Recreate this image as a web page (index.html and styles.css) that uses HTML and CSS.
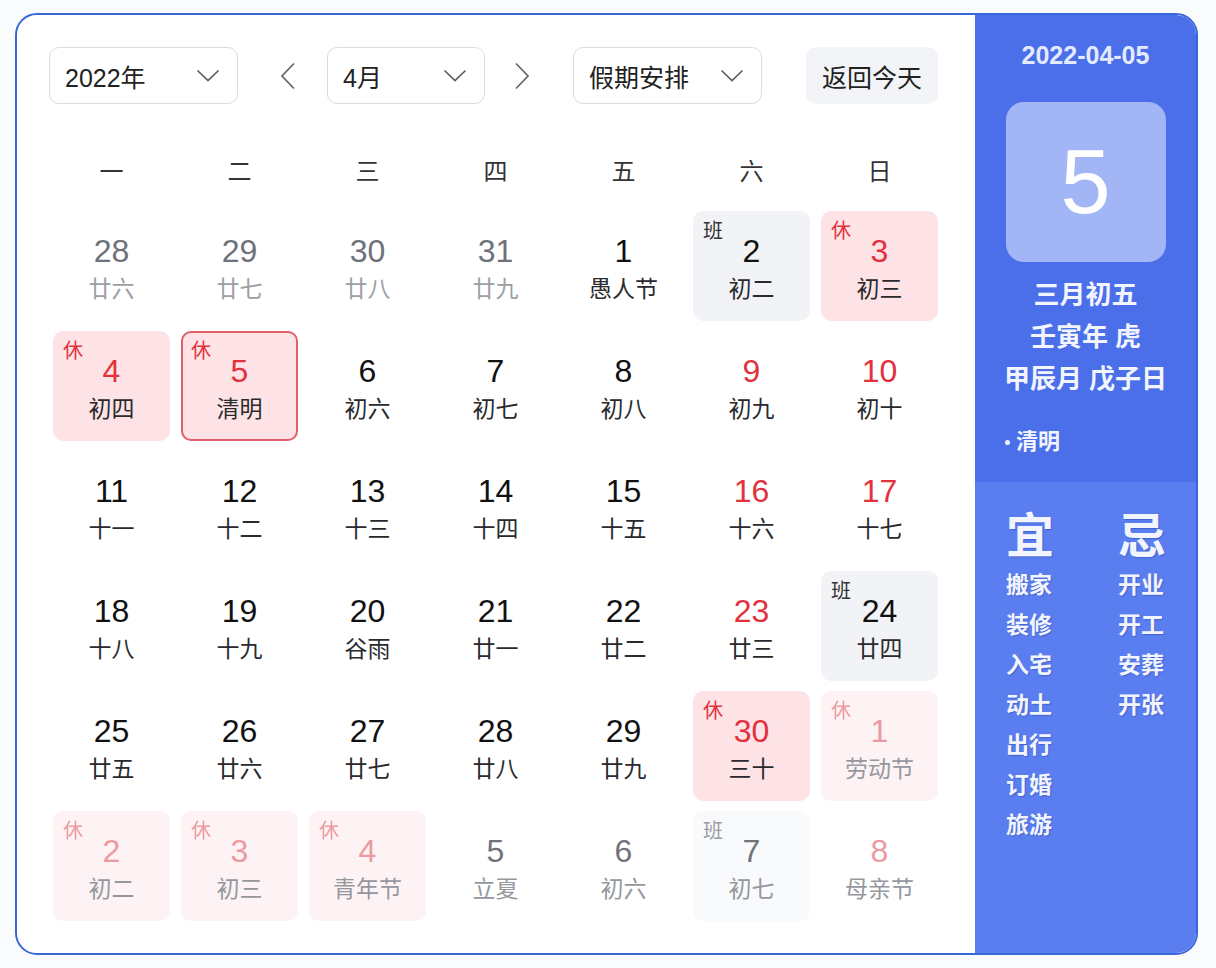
FILE: index.html
```html
<!DOCTYPE html>
<html lang="zh-CN">
<head>
<meta charset="utf-8">
<title>日历</title>
<link rel="stylesheet" href="styles.css">
</head>
<body>
<div class="card">
  <div class="main">
    <div class="toolbar">
      <div class="select sel-year"><span>2022年</span><svg class="chev" viewBox="0 0 24 13"><polyline points="1.5,1.5 12,11.5 22.5,1.5"/></svg></div>
      <div class="nav nav-prev"><svg class="arrow" viewBox="0 0 16 28"><polyline points="14,1.5 2,14 14,26.5"/></svg></div>
      <div class="select sel-month"><span>4月</span><svg class="chev" viewBox="0 0 24 13"><polyline points="1.5,1.5 12,11.5 22.5,1.5"/></svg></div>
      <div class="nav nav-next"><svg class="arrow" viewBox="0 0 16 28"><polyline points="2,1.5 14,14 2,26.5"/></svg></div>
      <div class="select sel-holiday"><span>假期安排</span><svg class="chev" viewBox="0 0 24 13"><polyline points="1.5,1.5 12,11.5 22.5,1.5"/></svg></div>
      <button class="today">返回今天</button>
    </div>
    <div class="weekdays">
      <span>一</span><span>二</span><span>三</span><span>四</span><span>五</span><span>六</span><span>日</span>
    </div>
    <div class="grid">
      <div class="cell prev"><span class="num">28</span><span class="lunar">廿六</span></div>
      <div class="cell prev"><span class="num">29</span><span class="lunar">廿七</span></div>
      <div class="cell prev"><span class="num">30</span><span class="lunar">廿八</span></div>
      <div class="cell prev"><span class="num">31</span><span class="lunar">廿九</span></div>
      <div class="cell"><span class="num">1</span><span class="lunar">愚人节</span></div>
      <div class="cell work"><span class="tag">班</span><span class="num">2</span><span class="lunar">初二</span></div>
      <div class="cell rest"><span class="tag">休</span><span class="num">3</span><span class="lunar">初三</span></div>

      <div class="cell rest"><span class="tag">休</span><span class="num">4</span><span class="lunar">初四</span></div>
      <div class="cell rest selected"><span class="tag">休</span><span class="num">5</span><span class="lunar">清明</span></div>
      <div class="cell"><span class="num">6</span><span class="lunar">初六</span></div>
      <div class="cell"><span class="num">7</span><span class="lunar">初七</span></div>
      <div class="cell"><span class="num">8</span><span class="lunar">初八</span></div>
      <div class="cell weekend"><span class="num">9</span><span class="lunar">初九</span></div>
      <div class="cell weekend"><span class="num">10</span><span class="lunar">初十</span></div>

      <div class="cell"><span class="num">11</span><span class="lunar">十一</span></div>
      <div class="cell"><span class="num">12</span><span class="lunar">十二</span></div>
      <div class="cell"><span class="num">13</span><span class="lunar">十三</span></div>
      <div class="cell"><span class="num">14</span><span class="lunar">十四</span></div>
      <div class="cell"><span class="num">15</span><span class="lunar">十五</span></div>
      <div class="cell weekend"><span class="num">16</span><span class="lunar">十六</span></div>
      <div class="cell weekend"><span class="num">17</span><span class="lunar">十七</span></div>

      <div class="cell"><span class="num">18</span><span class="lunar">十八</span></div>
      <div class="cell"><span class="num">19</span><span class="lunar">十九</span></div>
      <div class="cell"><span class="num">20</span><span class="lunar">谷雨</span></div>
      <div class="cell"><span class="num">21</span><span class="lunar">廿一</span></div>
      <div class="cell"><span class="num">22</span><span class="lunar">廿二</span></div>
      <div class="cell weekend"><span class="num">23</span><span class="lunar">廿三</span></div>
      <div class="cell work"><span class="tag">班</span><span class="num">24</span><span class="lunar">廿四</span></div>

      <div class="cell"><span class="num">25</span><span class="lunar">廿五</span></div>
      <div class="cell"><span class="num">26</span><span class="lunar">廿六</span></div>
      <div class="cell"><span class="num">27</span><span class="lunar">廿七</span></div>
      <div class="cell"><span class="num">28</span><span class="lunar">廿八</span></div>
      <div class="cell"><span class="num">29</span><span class="lunar">廿九</span></div>
      <div class="cell rest"><span class="tag">休</span><span class="num">30</span><span class="lunar">三十</span></div>
      <div class="cell next rest"><span class="tag">休</span><span class="num">1</span><span class="lunar">劳动节</span></div>

      <div class="cell next rest"><span class="tag">休</span><span class="num">2</span><span class="lunar">初二</span></div>
      <div class="cell next rest"><span class="tag">休</span><span class="num">3</span><span class="lunar">初三</span></div>
      <div class="cell next rest"><span class="tag">休</span><span class="num">4</span><span class="lunar">青年节</span></div>
      <div class="cell next"><span class="num">5</span><span class="lunar">立夏</span></div>
      <div class="cell next"><span class="num">6</span><span class="lunar">初六</span></div>
      <div class="cell next work"><span class="tag">班</span><span class="num">7</span><span class="lunar">初七</span></div>
      <div class="cell next weekend"><span class="num">8</span><span class="lunar">母亲节</span></div>
    </div>
  </div>
  <div class="panel">
    <div class="panel-top">
      <div class="p-date">2022-04-05</div>
      <div class="p-day">5</div>
      <div class="p-lines">
        <div>三月初五</div>
        <div>壬寅年 虎</div>
        <div>甲辰月 戊子日</div>
      </div>
      <div class="p-fest"><span class="dot"></span>清明</div>
    </div>
    <div class="panel-bottom">
      <div class="col">
        <div class="col-head">宜</div>
        <div class="item">搬家</div>
        <div class="item">装修</div>
        <div class="item">入宅</div>
        <div class="item">动土</div>
        <div class="item">出行</div>
        <div class="item">订婚</div>
        <div class="item">旅游</div>
      </div>
      <div class="col">
        <div class="col-head">忌</div>
        <div class="item">开业</div>
        <div class="item">开工</div>
        <div class="item">安葬</div>
        <div class="item">开张</div>
      </div>
    </div>
  </div>
</div>
</body>
</html>
```
FILE: styles.css
```css
* { box-sizing: border-box; }
html, body { margin: 0; padding: 0; }
body {
  background: #fafbfc;
  font-family: "Liberation Sans", "Noto Sans CJK SC", sans-serif;
  color: #1d1d1f;
}
.card {
  margin: 13px 0 0 15px;
  width: 1183px;
  height: 942px;
  border: 2px solid #3868d8;
  border-radius: 22px;
  overflow: hidden;
  display: flex;
  background: #ffffff;
}
.main {
  flex: none;
  width: 958px;
  padding: 32px 0 0 32px;
}
.toolbar {
  display: flex;
  align-items: center;
  height: 57px;
}
.select {
  height: 57px;
  border: 1px solid #d9dce3;
  border-radius: 10px;
  display: flex;
  align-items: center;
  justify-content: space-between;
  padding: 0 17px 0 15px;
  font-size: 25px;
  color: #222;
}
.sel-year { width: 189px; }
.sel-month { width: 158px; }
.sel-holiday { width: 189px; }
.chev {
  width: 24px;
  height: 13px;
  fill: none;
  stroke: #5c5f66;
  stroke-width: 1.7;
}
.nav {
  width: 89px;
  height: 57px;
  display: flex;
  align-items: center;
  justify-content: center;
}
.nav-prev { padding-left: 11px; }
.nav-next { width: 88px; padding-right: 14px; }
.arrow {
  width: 16px;
  height: 28px;
  fill: none;
  stroke: #666a70;
  stroke-width: 1.8;
}
.today {
  margin-left: 44px;
  width: 132px;
  height: 57px;
  border: none;
  border-radius: 10px;
  background: #f3f4f7;
  font-family: "Liberation Sans", "Noto Sans CJK SC", sans-serif;
  font-size: 25px;
  color: #222;
  padding: 0;
}
.weekdays {
  margin: 48px 0 0 4px;
  display: grid;
  grid-template-columns: repeat(7, 117px);
  column-gap: 11px;
  line-height: 40px;
  font-size: 24px;
  color: #333;
  text-align: center;
}
.grid {
  margin: 19px 0 0 4px;
  display: grid;
  grid-template-columns: repeat(7, 117px);
  grid-auto-rows: 110px;
  column-gap: 11px;
  row-gap: 10px;
}
.cell {
  position: relative;
  border-radius: 10px;
  display: flex;
  flex-direction: column;
  align-items: center;
  padding-top: 20px;
}
.num {
  font-size: 32px;
  line-height: 40px;
  color: #111;
}
.lunar {
  margin-top: 2px;
  font-size: 23px;
  line-height: 32px;
  color: #2a2a2e;
}
.tag {
  position: absolute;
  left: 10px;
  top: 8px;
  font-size: 20px;
  line-height: 24px;
  color: #333;
}
.rest { background: #fde3e5; }
.rest .num, .rest .tag, .weekend .num { color: #e3303d; }
.work { background: #f2f3f6; }
.selected {
  border: 2px solid #e05f6a;
  padding-top: 18px;
}
.selected .tag { left: 8px; top: 6px; }
.prev .num { color: #6e717a; }
.prev .lunar { color: #9c9ea6; }
.next .num { color: #70737b; }
.next .lunar { color: #95979e; }
.next .tag { color: #9a9ca3; }
.next.rest { background: #fdf3f4; }
.next.rest .num, .next.rest .tag, .next.weekend .num { color: #eb9aa1; }
.next.work { background: #f9fafb; }

.panel {
  flex: 1;
  min-width: 0;
  display: flex;
  flex-direction: column;
  color: #f2f5ff;
}
.panel-top {
  height: 467px;
  background: #4a6fe9;
  padding-top: 25px;
  display: flex;
  flex-direction: column;
  align-items: center;
}
.p-date {
  font-size: 25px;
  line-height: 30px;
  font-weight: bold;
  color: #e4eaff;
}
.p-day {
  margin-top: 32px;
  width: 160px;
  height: 160px;
  border-radius: 18px;
  background: #a2b5f5;
  color: #ffffff;
  font-size: 90px;
  display: flex;
  align-items: center;
  justify-content: center;
}
.p-lines {
  margin-top: 12px;
  text-align: center;
  font-size: 26px;
  line-height: 42px;
  font-weight: bold;
}
.p-fest {
  align-self: flex-start;
  margin: 27px 0 0 30px;
  font-size: 22px;
  line-height: 30px;
  font-weight: bold;
  display: flex;
  align-items: center;
}
.dot {
  width: 5px;
  height: 5px;
  border-radius: 50%;
  background: #f2f5ff;
  margin-right: 6px;
}
.panel-bottom {
  flex: 1;
  background: #5a7ef0;
  padding: 27px 0 0 31px;
  display: flex;
}
.col { width: 112px; flex: none; }
.col-head {
  font-size: 48px;
  line-height: 56px;
  font-weight: bold;
  text-shadow: 1px 1px 1px rgba(30, 50, 140, 0.35);
}
.item {
  font-size: 23px;
  line-height: 40px;
  font-weight: bold;
  text-shadow: 1px 1px 1px rgba(30, 50, 140, 0.35);
}
```
